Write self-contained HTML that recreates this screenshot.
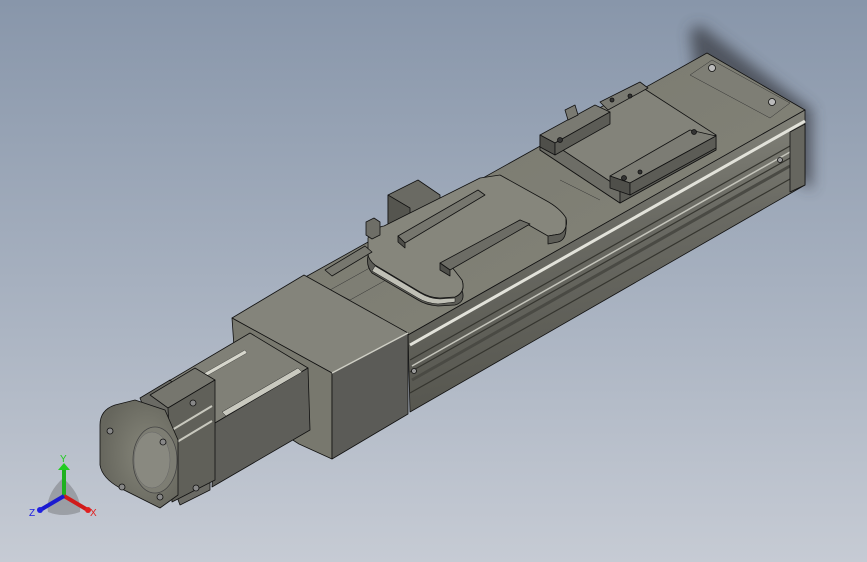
<!DOCTYPE html>
<html><head><meta charset="utf-8"><style>
html,body{margin:0;padding:0;width:867px;height:562px;overflow:hidden}
body{background:linear-gradient(180deg,#8896aa 0%,#a6b0bf 50%,#c6cbd4 100%)}
svg{position:absolute;left:0;top:0}
</style></head><body>
<svg width="867" height="562" viewBox="0 0 867 562" xmlns="http://www.w3.org/2000/svg">
<defs>
<filter id="bl" x="-50%" y="-50%" width="200%" height="200%"><feGaussianBlur stdDeviation="7"/></filter>
<linearGradient id="side" x1="0" y1="0" x2="0.15" y2="1"><stop offset="0" stop-color="#8c8c82"/><stop offset="0.45" stop-color="#6a6a63"/><stop offset="1" stop-color="#56564f"/></linearGradient>
<linearGradient id="top" x1="0" y1="0" x2="1" y2="1"><stop offset="0" stop-color="#78786e"/><stop offset="1" stop-color="#85857a"/></linearGradient>
<radialGradient id="cap" cx="0.6" cy="0.5" r="0.6"><stop offset="0" stop-color="#86867a"/><stop offset="1" stop-color="#66665d"/></radialGradient>
</defs>
<g stroke="#111" stroke-width="0.8" stroke-linejoin="round">
<path d="M690,30 L700,25 L812,110 L812,190 L700,110 Z" fill="#3a3d45" stroke="none" filter="url(#bl)" opacity="0.75"/>
<!-- rail top face -->
<path d="M300,280 L707,53 L805,110 L408,335 Z" fill="url(#top)"/>
<path d="M690,75 L712,60 L790,103 L770,118 Z" fill="#7e7e75" stroke="#333" stroke-width="0.5"/>
<circle cx="712" cy="68" r="3.5" fill="#bbb"/><circle cx="772" cy="102" r="3.5" fill="#bbb"/>
<path d="M330,290 L420,240 L440,250 L350,300 Z M340,300 L380,320 M560,180 L600,200" fill="none" stroke="#333" stroke-width="0.5"/>
<!-- rail right side face -->
<path d="M408,335 L805,110 L805,185 L410,412 Z" fill="url(#side)"/>
<path d="M410,345 L805,121" stroke="#e2e2da" stroke-width="3"/>
<path d="M410,360 L790,146 M410,372 L790,158 M410,393 L790,179" stroke="#35352f" stroke-width="1.2"/>
<path d="M412,366 L790,152" stroke="#c4c4bb" stroke-width="1.5"/>
<path d="M412,380 L790,166" stroke="#4a4a44" stroke-width="3"/>
<path d="M790,132 L805,124 L805,185 L790,192 Z" fill="#66665f"/>
<circle cx="414" cy="371" r="2.5" fill="#999"/><circle cx="780" cy="160" r="2.5" fill="#999"/>
<!-- rear carriage -->
<path d="M540,140 L640,86 L716,135 L716,150 L620,203 L540,150 Z" fill="#83837a"/>
<path d="M540,150 L620,203 L620,188 L540,135 Z" fill="#6d6d66"/>
<path d="M620,188 L716,135 L716,150 L620,203 Z" fill="#5a5a54"/>
<path d="M540,135 L595,105 L610,112 L555,143 Z" fill="#7a7a72"/>
<path d="M540,135 L555,143 L555,155 L540,147 Z" fill="#4f4f4a"/>
<path d="M555,143 L610,112 L610,124 L555,155 Z" fill="#5c5c56"/>
<path d="M600,102 L640,82 L648,88 L608,110 Z" fill="#7a7a72"/>
<path d="M610,176 L690,130 L716,136 L630,183 Z" fill="#7c7c74"/>
<path d="M610,176 L630,183 L630,195 L610,188 Z" fill="#4f4f4a"/>
<path d="M630,183 L716,136 L716,148 L630,195 Z" fill="#5c5c56"/>
<circle cx="560" cy="140" r="2.5" fill="#333"/><circle cx="612" cy="100" r="2" fill="#333"/><circle cx="630" cy="96" r="2" fill="#333"/><circle cx="624" cy="178" r="2.5" fill="#333"/><circle cx="640" cy="172" r="2" fill="#333"/><circle cx="694" cy="132" r="2.5" fill="#333"/>
<path d="M565,110 L575,105 L578,115 L568,120 Z" fill="#7a7a72"/>
<!-- front bracket -->
<path d="M388,195 L418,180 L440,195 L440,235 L410,250 L388,235 Z" fill="#6a6a63"/>
<path d="M388,195 L410,208 L410,250 L388,235 Z" fill="#55554f"/>
<circle cx="432" cy="208" r="3" fill="#777"/><circle cx="442" cy="203" r="3" fill="#777"/>
<!-- front carriage U -->
<path d="M368,248 L375,265 L420,292 Q430,298 440,298 L455,297 Q466,292 462,280 L462,290 Q466,302 455,305 L438,306 Q426,305 418,300 L372,273 Q366,266 368,256 Z" fill="#5d5d57"/>
<path d="M368,238 Q372,228 384,226 L480,178 L500,175 L545,200 Q560,208 566,218 Q568,230 560,234 L548,236 L520,220 L448,262 L462,280 Q466,292 455,297 L440,298 Q430,298 420,292 L375,265 Q366,258 368,248 Z" fill="#86867c"/>
<path d="M548,236 L560,234 Q568,230 566,218 L566,228 Q566,240 558,242 L548,244 Z" fill="#5d5d57"/>
<path d="M375,266 L420,293 Q430,299 440,299 L455,298 L455,302 L438,304 Q426,303 418,298 L372,271 Z" fill="#c0c0b6" stroke-width="0.5"/>
<path d="M398,236 L478,190 L485,195 L405,243 Z" fill="#76766e"/>
<path d="M398,236 L405,243 L405,248 L398,242 Z" fill="#4f4f4a"/>
<path d="M440,263 L520,220 L530,224 L450,270 Z" fill="#6c6c65"/>
<path d="M440,263 L450,270 L450,276 L440,270 Z" fill="#4f4f4a"/>
<path d="M366,222 L374,218 L380,222 L380,235 L372,239 L366,235 Z" fill="#6e6e67"/>
<path d="M325,270 L365,246 L372,252 L332,276 Z" fill="#77776f"/>
<!-- box block -->
<path d="M232,318 L304,275 L408,333 L332,373 Z" fill="#84847b"/>
<path d="M232,318 L332,373 L332,459 L299,444 L238,405 Z" fill="#78786e"/>
<path d="M332,373 L408,333 L408,414 L332,459 Z" fill="#5b5b57"/>
<path d="M332,373 L408,333" stroke="#cfcfc5" stroke-width="1.5"/>
<!-- motor body -->
<path d="M157,388 L250,333 L308,368 L215,423 Z" fill="#808077"/>
<path d="M215,423 L308,368 L310,430 L212,487 Z" fill="#5e5e59"/>
<path d="M222,412 L298,368 L302,372 L226,416 Z" fill="#c9c9bf" stroke-width="0.4"/>
<path d="M180,387 L245,350 L247,353 L182,390 Z" fill="#d6d6cc" stroke-width="0.3"/>
<!-- flange -->
<path d="M140,398 L170,380 L210,420 L210,490 L180,505 Z" fill="#6a6a64"/>
<path d="M150,395 L195,368 L215,380 L168,408 Z" fill="#76766e"/>
<path d="M168,408 L215,380 L215,480 L172,502 Z" fill="#606059"/>
<path d="M172,430 L212,406 M172,445 L212,421" stroke="#c8c8be" stroke-width="2"/>
<!-- front cap -->
<path d="M100,425 Q100,410 115,405 L135,400 L165,410 L178,440 L178,495 L160,508 L120,488 Q102,478 100,465 Z" fill="url(#cap)"/>
<ellipse cx="155" cy="460" rx="22" ry="33" fill="#7d7d73" stroke="#444"/>
<ellipse cx="152" cy="460" rx="18" ry="28" fill="#898980" stroke="#666" stroke-width="0.5"/>
<circle cx="110" cy="431" r="3" fill="#888"/><circle cx="122" cy="487" r="3" fill="#888"/><circle cx="160" cy="497" r="3" fill="#888"/><circle cx="163" cy="442" r="3" fill="#888"/>
<circle cx="193" cy="403" r="3" fill="#888"/><circle cx="196" cy="488" r="3" fill="#888"/>
</g>
<g>
<path d="M63,478 Q45,495 48,512 Q63,518 80,512 Q82,495 63,478 Z" fill="#555" opacity="0.35"/>
<line x1="64" y1="496" x2="64" y2="470" stroke="#1fb01f" stroke-width="4"/>
<path d="M58,470 L64,463 L70,470 Z" fill="#22cc22"/>
<line x1="64" y1="496" x2="86" y2="509" stroke="#d01a1a" stroke-width="4"/>
<line x1="64" y1="496" x2="42" y2="509" stroke="#1a1ad0" stroke-width="4"/>
<circle cx="88" cy="510" r="3" fill="#e02020"/><circle cx="40" cy="510" r="3" fill="#2020e0"/>
<text x="60" y="462" font-family="Liberation Sans, sans-serif" font-size="10" fill="#1fcc1f">Y</text>
<text x="90" y="516" font-family="Liberation Sans, sans-serif" font-size="10" fill="#e02020">X</text>
<text x="29" y="516" font-family="Liberation Sans, sans-serif" font-size="10" fill="#2020e0">Z</text>
</g>
</svg>
</body></html>
